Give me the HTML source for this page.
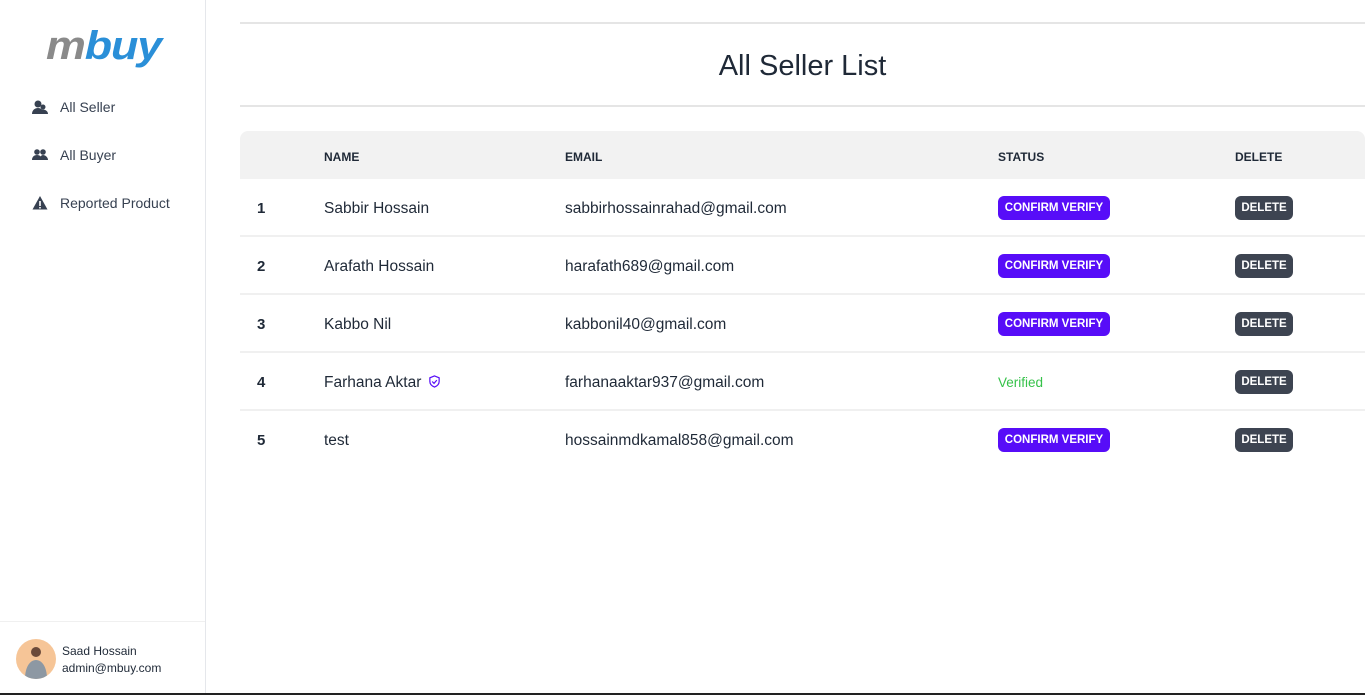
<!DOCTYPE html>
<html><head><style>
*{margin:0;padding:0;box-sizing:border-box}
body{width:1365px;height:695px;overflow:hidden;background:#fff;font-family:"Liberation Sans",sans-serif;color:#1f2937;position:relative}
.side{position:absolute;left:0;top:0;width:206px;height:693px;border-right:1px solid #e5e7eb}
.logo{position:absolute;left:46px;top:24px;font-size:40px;font-weight:bold;font-style:italic;letter-spacing:-1px;line-height:44px;transform:scaleX(1.12);transform-origin:left}
.nav{position:absolute;left:32px;font-size:14px;color:#374151;display:flex;align-items:center}
.nav svg{margin-right:12px}
.user{position:absolute;left:0;top:621px;width:205px;border-top:1px solid #f0f0f0;height:72px}
.av{position:absolute;left:16px;top:17px;width:40px;height:40px;border-radius:50%;background:#f6c597;overflow:hidden}
.un{position:absolute;left:62px;top:21px;font-size:12px;line-height:17px;color:#1f2937}
.bot{position:absolute;left:0;top:693px;width:1365px;height:2px;background:#222}
.hr{position:absolute;left:240px;width:1125px;height:2px;background:#e5e5e5}
h1{position:absolute;left:240px;width:1125px;top:50px;text-align:center;font-weight:normal;font-size:29px;color:#1f2937}
.th{position:absolute;left:240px;top:131px;width:1125px;height:48px;background:#f2f2f2;border-radius:8px 8px 0 0}
.h{position:absolute;top:150px;font-size:12px;font-weight:bold;color:#1f2937}
.row{position:absolute;left:240px;width:1125px;height:58px;border-bottom:2px solid #f0f0f0}
.c{position:absolute;font-size:15.5px;top:21px}
.n{left:17px;font-weight:bold;font-size:15px}
.btn{position:absolute;top:17px;height:24px;border-radius:6px;color:#fff;font-size:11.5px;font-weight:bold;line-height:24px;text-align:center}
.cv{left:758px;width:112px;background:#570df8}
.dl{left:995px;width:58px;background:#3d4451}
</style></head><body>
<div class="side">
<div class="logo"><span style="color:#8a8a8a">m</span><span style="color:#2a8fd8">buy</span></div>
<div class="nav" style="top:99px"><svg width="16" height="16" viewBox="0 0 16 16"><circle cx="6" cy="5" r="3.5" fill="#374151"/><path d="M0 15c0-4 3-6 6-6s6 2 6 6z" fill="#374151"/><circle cx="11" cy="8" r="2.5" fill="#374151"/><path d="M7 15c0-3 2-4.5 4-4.5s5 1.5 5 4.5z" fill="#374151"/></svg>All Seller</div>
<div class="nav" style="top:147px"><svg width="16" height="16" viewBox="0 0 16 16"><circle cx="5" cy="5" r="2.8" fill="#374151"/><circle cx="11" cy="5" r="2.8" fill="#374151"/><path d="M0 13c0-3 2-5 5-5s5 2 5 5zM8 13c0-3 1-5 3-5s5 2 5 5z" fill="#374151"/></svg>All Buyer</div>
<div class="nav" style="top:195px"><svg width="16" height="16" viewBox="0 0 16 16"><path d="M8 1L15.5 14.5H0.5z" fill="#374151"/><rect x="7.2" y="6" width="1.6" height="5" fill="#fff"/><rect x="7.2" y="12" width="1.6" height="1.5" fill="#fff"/></svg>Reported Product</div>
<div class="user"><div class="av"><svg width="40" height="40" viewBox="0 0 40 40"><circle cx="20" cy="13" r="5" fill="#6b4a3a"/><path d="M9 40c0-12 5-19 11-19s11 7 11 19z" fill="#8d98a3"/></svg></div>
<div class="un">Saad Hossain<br>admin@mbuy.com</div></div>
</div>
<div class="bot"></div>
<div class="hr" style="top:22px"></div>
<h1>All Seller List</h1>
<div class="hr" style="top:105px"></div>
<div class="th"></div>
<div class="h" style="left:324px">NAME</div>
<div class="h" style="left:565px">EMAIL</div>
<div class="h" style="left:998px">STATUS</div>
<div class="h" style="left:1235px">DELETE</div>

<div class="row" style="top:179px"><div class="c n">1</div><div class="c" style="left:84px">Sabbir Hossain</div><div class="c" style="left:325px">sabbirhossainrahad@gmail.com</div><div class="btn cv">CONFIRM VERIFY</div><div class="btn dl">DELETE</div></div>
<div class="row" style="top:237px"><div class="c n">2</div><div class="c" style="left:84px">Arafath Hossain</div><div class="c" style="left:325px">harafath689@gmail.com</div><div class="btn cv">CONFIRM VERIFY</div><div class="btn dl">DELETE</div></div>
<div class="row" style="top:295px"><div class="c n">3</div><div class="c" style="left:84px">Kabbo Nil</div><div class="c" style="left:325px">kabbonil40@gmail.com</div><div class="btn cv">CONFIRM VERIFY</div><div class="btn dl">DELETE</div></div>
<div class="row" style="top:353px"><div class="c n">4</div><div class="c" style="left:84px">Farhana Aktar <svg width="13" height="13" viewBox="0 0 14 14" style="vertical-align:-1px;margin-left:2px"><path d="M7 1l5 2v4c0 3-2.5 5-5 6-2.5-1-5-3-5-6V3z" fill="none" stroke="#570df8" stroke-width="1.3"/><path d="M4.5 7l2 2 3-3.5" fill="none" stroke="#570df8" stroke-width="1.3"/></svg></div><div class="c" style="left:325px">farhanaaktar937@gmail.com</div><div class="c" style="left:758px;font-size:13.5px;top:22px;color:#36c24a">Verified</div><div class="btn dl">DELETE</div></div>
<div class="row" style="top:411px;border-bottom:none"><div class="c n">5</div><div class="c" style="left:84px">test</div><div class="c" style="left:325px">hossainmdkamal858@gmail.com</div><div class="btn cv">CONFIRM VERIFY</div><div class="btn dl">DELETE</div></div>
</body></html>
